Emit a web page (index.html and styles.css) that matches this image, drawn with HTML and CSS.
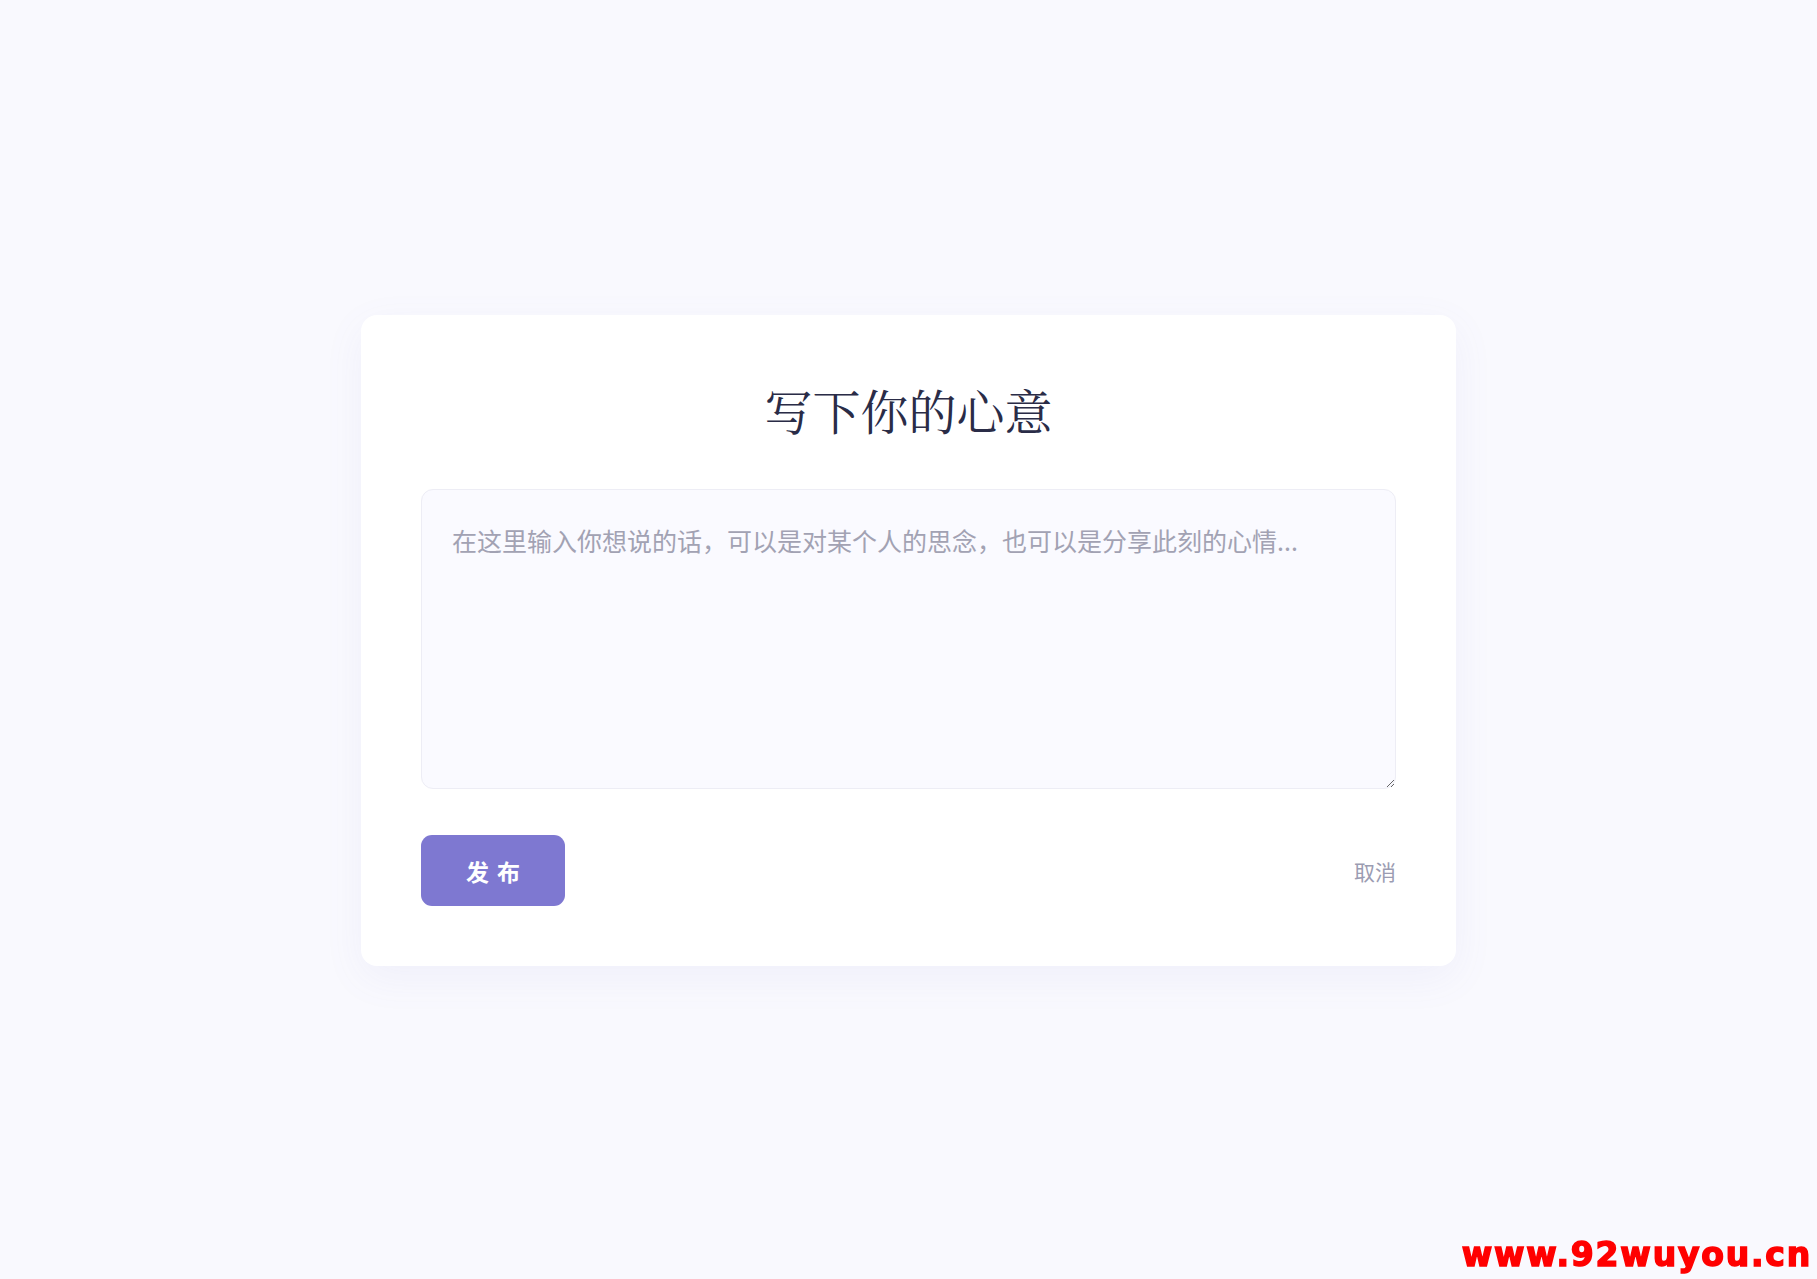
FILE: index.html
```html
<!DOCTYPE html>
<html lang="zh-CN">
<head>
<meta charset="utf-8">
<title>写下你的心意</title>
<link rel="stylesheet" href="styles.css">
</head>
<body>
<main class="page">
  <section class="card">
    <h1 class="title">写下你的心意</h1>
    <textarea class="message" placeholder="在这里输入你想说的话，可以是对某个人的思念，也可以是分享此刻的心情..."></textarea>
    <div class="actions">
      <button class="btn-publish" type="button">发布</button>
      <button class="btn-cancel" type="button">取消</button>
    </div>
  </section>
</main>
<div class="watermark">www.92wuyou.cn</div>
</body>
</html>
```

FILE: styles.css
```css
html, body {
  margin: 0;
  padding: 0;
}

body {
  background: #f9f9fe;
  font-family: "Noto Sans CJK SC", "Noto Sans", sans-serif;
  color: #2b2d48;
}

.page {
  min-height: 100vh;
  box-sizing: border-box;
  padding-top: 2px;
  display: flex;
  align-items: center;
  justify-content: center;
}

.card {
  width: 1095px;
  box-sizing: border-box;
  padding: 60px;
  background: #ffffff;
  border-radius: 16px;
  box-shadow: 0 12px 40px rgba(110, 110, 200, 0.07);
  display: flex;
  flex-direction: column;
}

.title {
  margin: 0 0 44px;
  text-align: center;
  font-family: "Noto Serif CJK SC", "Source Han Serif SC", "AR PL UMing CN", "Liberation Serif", serif;
  font-weight: 400;
  font-size: 48px;
  line-height: 70px;
  color: #2a2c47;
}

.message {
  display: block;
  width: 100%;
  height: 300px;
  box-sizing: border-box;
  padding: 30px;
  margin: 0;
  border: 1px solid #ededf5;
  border-radius: 12px;
  background: #fafaff;
  font-family: "Noto Sans CJK SC", "Noto Sans", sans-serif;
  font-size: 25px;
  line-height: 40px;
  color: #2b2d48;
  outline: none;
}

.message::placeholder {
  color: #a2a2b3;
}

.actions {
  margin-top: 46px;
  display: flex;
  align-items: center;
  justify-content: space-between;
}

.btn-publish {
  height: 71px;
  padding: 0 37px 0 45px;
  border: none;
  border-radius: 11px;
  background: #7e78d1;
  color: #ffffff;
  font-family: "Noto Sans CJK SC", "Noto Sans", sans-serif;
  font-size: 23px;
  font-weight: 600;
  letter-spacing: 8px;
  cursor: pointer;
}

.btn-cancel {
  padding: 0;
  border: none;
  background: none;
  color: #9b9cb2;
  font-family: "Noto Sans CJK SC", "Noto Sans", sans-serif;
  font-size: 21px;
  cursor: pointer;
}

.watermark {
  position: fixed;
  right: 5px;
  bottom: 8px;
  font-family: "DejaVu Sans", "Liberation Sans", sans-serif;
  font-weight: 700;
  font-size: 33px;
  line-height: 33px;
  letter-spacing: 1.8px;
  color: #ff0000;
  -webkit-text-stroke: 1.5px #ff0000;
}
```
